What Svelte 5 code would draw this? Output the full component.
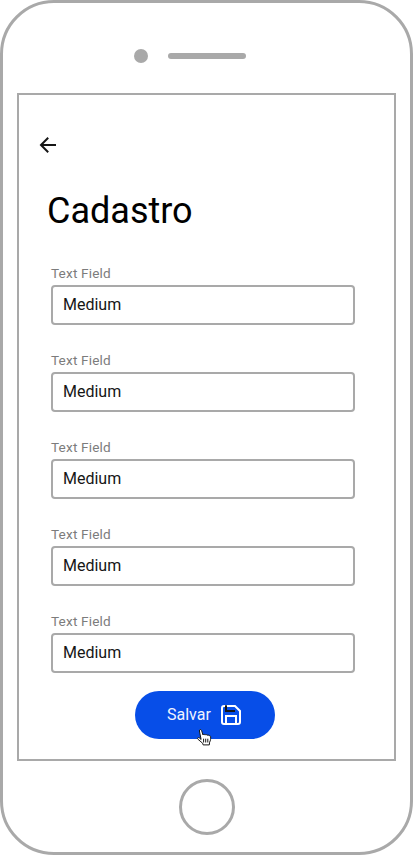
<script>
  const fields = Array.from({ length: 5 }, (_, id) => ({ id, label: 'Text Field', value: 'Medium' }));
</script>

<div class="phone">
  <header class="speaker">
    <span class="camera"></span>
    <span class="slot"></span>
  </header>

  <main class="screen">
    <svg class="back" viewBox="0 0 24 24" width="24" height="24" aria-hidden="true">
      <path d="M20 12H5M12.2 4.8L5 12l7.2 7.2" />
    </svg>
    <h1>Cadastro</h1>
    <div class="fields">
      {#each fields as field (field.id)}
        <div class="field">
          <span class="label">{field.label}</span>
          <div class="box">{field.value}</div>
        </div>
      {/each}
    </div>
    <div class="save">
      <span class="caption">Salvar</span>
      <svg viewBox="0 0 20 20" width="20" height="20" aria-hidden="true">
        <path class="light" d="M14 1H3a2 2 0 0 0-2 2v14a2 2 0 0 0 2 2h14a2 2 0 0 0 2-2V6z" />
        <path class="light" d="M5 19v-8h10v8" />
        <path class="dark" d="M5 .3v5.7h9" />
      </svg>
      <svg class="cursor" viewBox="0 0 15 17" width="15" height="17" aria-hidden="true">
        <path d="M2.4 2C2.1.2 4.1 0 4.6 1.6L6 6c.3-1 1.8-1 2.1.1.4-.9 1.8-.7 2.1.3.5-.8 1.7-.5 2 .5.6-.5 1.3-.1 1.4.7.2 2.2 0 3.9-1 5.6l-.3 2.7H6.1l-.4-1.6L.8 10.1C0 8.9 1.4 8 2.4 8.9l1.7 1.6z" />
        <path d="M6.6 9.7v3.8M8.7 9.7v3.8M10.8 9.7v3.8" />
      </svg>
    </div>
  </main>

  <footer class="home"></footer>
</div>

<style>
  .phone {
    box-sizing: border-box;
    width: 413px;
    height: 855px;
    border: 3px solid #a9a9a9;
    border-radius: 54px;
    background: #fff;
    display: flex;
    flex-direction: column;
    font-family: Roboto, sans-serif;
  }
  .speaker {
    height: 14px;
    padding: 46px 0 30px 131px;
    display: flex;
    align-items: center;
    gap: 20px;
  }
  .camera {
    width: 14px;
    height: 14px;
    border-radius: 50%;
    background: #a9a9a9;
  }
  .slot {
    width: 78px;
    height: 6px;
    border-radius: 3px;
    background: #a9a9a9;
  }
  .screen {
    box-sizing: border-box;
    width: 379px;
    height: 668px;
    margin-left: 14px;
    border: 2px solid #a9a9a9;
    display: flex;
    flex-direction: column;
  }
  .back {
    margin: 38px 0 0 17px;
    fill: none;
    stroke: #161616;
    stroke-width: 2;
  }
  h1 {
    margin: 33px 0 0 28px;
    font-size: 36px;
    line-height: 42px;
    font-weight: 400;
    color: #000;
  }
  .fields {
    margin: 33px 0 0 32px;
    display: flex;
    flex-direction: column;
    gap: 27px;
  }
  .field {
    width: 304px;
    height: 60px;
    display: flex;
    flex-direction: column;
  }
  .label {
    height: 20px;
    font-size: 13.6px;
    line-height: 17px;
    letter-spacing: 0.16px;
    color: #7c7c7c;
  }
  .box {
    box-sizing: border-box;
    height: 40px;
    padding-left: 10px;
    border: 2px solid #a9a9a9;
    border-radius: 4px;
    font-size: 16px;
    line-height: 35px;
    color: #161616;
  }
  .save {
    position: relative;
    box-sizing: border-box;
    width: 140px;
    height: 48px;
    margin: 18px 0 0 116px;
    padding-left: 32px;
    border-radius: 24px;
    background: #074ee8;
    color: #f0f4ff;
    font-size: 16px;
    display: flex;
    align-items: center;
    gap: 10px;
  }
  .caption {
    padding-bottom: 2px;
  }
  .save svg {
    fill: none;
    stroke-width: 2;
  }
  .light {
    stroke: #fff;
  }
  .dark {
    stroke: #161616;
  }
  .save .cursor {
    position: absolute;
    left: 62px;
    top: 38px;
    fill: #fff;
    stroke: #161616;
    stroke-width: 1;
  }
  .home {
    box-sizing: border-box;
    width: 56px;
    height: 56px;
    margin: 18px 0 0 176px;
    border: 3px solid #a9a9a9;
    border-radius: 50%;
  }
</style>
